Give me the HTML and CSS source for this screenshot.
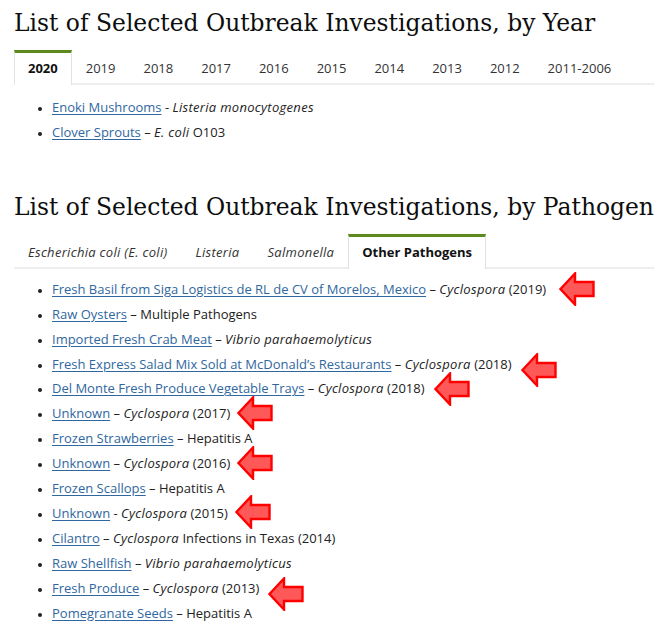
FILE: index.html
```html
<!DOCTYPE html>
<html lang="en">
<head>
    <meta charset="UTF-8">
    <title>Outbreak Investigations</title>
    <link rel="stylesheet" href="styles.css">
</head>
<body>

<h1 class="section-title">List of Selected Outbreak Investigations, by Year</h1>

<ul class="tabs">
    <li class="tab active">2020</li>
    <li class="tab">2019</li>
    <li class="tab">2018</li>
    <li class="tab">2017</li>
    <li class="tab">2016</li>
    <li class="tab">2015</li>
    <li class="tab">2014</li>
    <li class="tab">2013</li>
    <li class="tab">2012</li>
    <li class="tab">2011-2006</li>
</ul>

<ul class="outbreaks outbreaks-short">
    <li><a href="#">Enoki Mushrooms</a> - <em>Listeria monocytogenes</em></li>
    <li><a href="#">Clover Sprouts</a> – <em>E. coli</em> O103</li>
</ul>

<h1 class="section-title">List of Selected Outbreak Investigations, by Pathogen</h1>

<ul class="tabs">
    <li class="tab"><em>Escherichia coli (E. coli)</em></li>
    <li class="tab"><em>Listeria</em></li>
    <li class="tab"><em>Salmonella</em></li>
    <li class="tab active">Other Pathogens</li>
</ul>

<ul class="outbreaks">
    <li><a href="#">Fresh Basil from Siga Logistics de RL de CV of Morelos, Mexico</a> – <em>Cyclospora</em> (2019)<svg class="callout callout-wide" viewBox="0 0 36 34"><path d="M1.5 17 L16 1.5 L16 10 L34.5 10 L34.5 24 L16 24 L16 32.5 Z"/></svg></li>
    <li><a href="#">Raw Oysters</a> – Multiple Pathogens</li>
    <li><a href="#">Imported Fresh Crab Meat</a> – <em>Vibrio parahaemolyticus</em></li>
    <li><a href="#">Fresh Express Salad Mix Sold at McDonald’s Restaurants</a> – <em>Cyclospora</em> (2018)<svg class="callout callout-low" viewBox="0 0 36 34"><path d="M1.5 17 L16 1.5 L16 10 L34.5 10 L34.5 24 L16 24 L16 32.5 Z"/></svg></li>
    <li><a href="#">Del Monte Fresh Produce Vegetable Trays</a> – <em>Cyclospora</em> (2018)<svg class="callout" viewBox="0 0 36 34"><path d="M1.5 17 L16 1.5 L16 10 L34.5 10 L34.5 24 L16 24 L16 32.5 Z"/></svg></li>
    <li><a href="#">Unknown</a> – <em>Cyclospora</em> (2017)<svg class="callout callout-near" viewBox="0 0 36 34"><path d="M1.5 17 L16 1.5 L16 10 L34.5 10 L34.5 24 L16 24 L16 32.5 Z"/></svg></li>
    <li><a href="#">Frozen Strawberries</a> – Hepatitis A</li>
    <li><a href="#">Unknown</a> – <em>Cyclospora</em> (2016)<svg class="callout callout-near" viewBox="0 0 36 34"><path d="M1.5 17 L16 1.5 L16 10 L34.5 10 L34.5 24 L16 24 L16 32.5 Z"/></svg></li>
    <li><a href="#">Frozen Scallops</a> – Hepatitis A</li>
    <li><a href="#">Unknown</a> - <em>Cyclospora</em> (2015)<svg class="callout callout-near" viewBox="0 0 36 34"><path d="M1.5 17 L16 1.5 L16 10 L34.5 10 L34.5 24 L16 24 L16 32.5 Z"/></svg></li>
    <li><a href="#">Cilantro</a> – <em>Cyclospora</em> Infections in Texas (2014)</li>
    <li><a href="#">Raw Shellfish</a> – <em>Vibrio parahaemolyticus</em></li>
    <li><a href="#">Fresh Produce</a> – <em>Cyclospora</em> (2013)<svg class="callout callout-low" viewBox="0 0 36 34"><path d="M1.5 17 L16 1.5 L16 10 L34.5 10 L34.5 24 L16 24 L16 32.5 Z"/></svg></li>
    <li><a href="#">Pomegranate Seeds</a> – Hepatitis A</li>
</ul>

</body>
</html>
```

FILE: styles.css
```css
body {
    font-family: 'Open Sans', 'Liberation Sans', sans-serif;
    font-size: 13px;
    color: #222;
    background-color: #fff;
    margin: 0;
    padding: 0 12px 0 14px;
}

em {
    letter-spacing: 0.3px;
}

.section-title {
    font-family: 'DejaVu Serif', 'Liberation Serif', serif;
    font-weight: normal;
    font-size: 23.4px;
    line-height: 34px;
    white-space: nowrap;
    color: #0d0d0d;
    margin: 6px 0 10px;
}

.tabs {
    list-style: none;
    margin: 0;
    padding: 0;
    display: flex;
    border-bottom: 2px solid #eee;
}

.tab {
    padding: 0 13px;
    height: 30px;
    line-height: 31px;
    border: 1px solid transparent;
    border-top-width: 3px;
    border-bottom: none;
    color: #333;
    margin-bottom: -2px;
}

.tab.active {
    font-weight: bold;
    color: #111;
    background-color: #fff;
    border-color: #e2e2e2;
    border-top-color: #5c8a1e;
    height: 32px;
}

.outbreaks {
    margin: 8px 0 0;
    padding-left: 38px;
    list-style: disc;
}

.outbreaks li {
    line-height: 24.9px;
}

.outbreaks li::marker {
    font-size: 10px;
}

.outbreaks-short {
    margin-top: 10px;
    margin-bottom: 45px;
}

.outbreaks a {
    color: #2f67a0;
    text-decoration: underline;
    text-underline-offset: 2px;
}

.callout {
    width: 36px;
    height: 34px;
    vertical-align: middle;
    margin: -12px 0 -10px 9px;
    fill: #ff5858;
    stroke: #f00;
    stroke-width: 2.4;
}

.callout-wide {
    margin-left: 13px;
}

.callout-near {
    margin-left: 7px;
    margin-top: -14px;
}

.callout-low {
    margin-top: -4px;
    margin-bottom: -14px;
}
```
